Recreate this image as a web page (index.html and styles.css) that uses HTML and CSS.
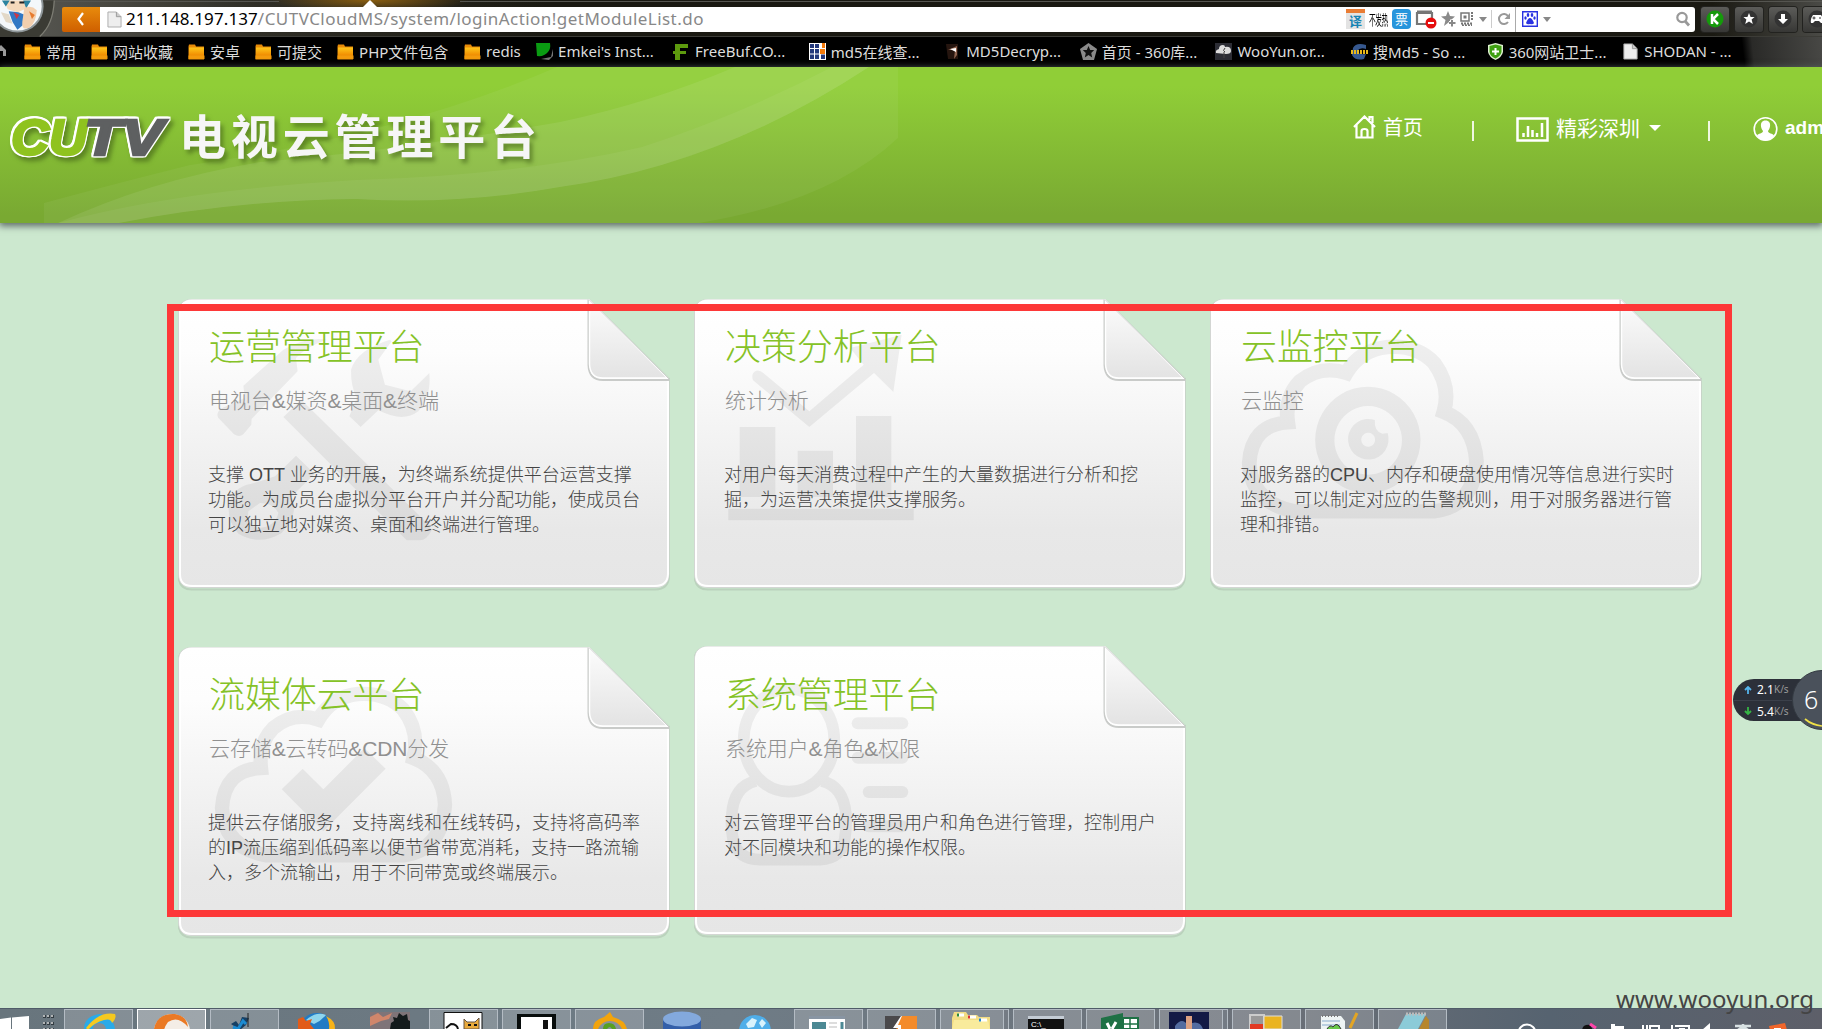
FILE: index.html
```html
<!DOCTYPE html>
<html lang="zh-CN">
<head>
<meta charset="utf-8">
<title>CUTV电视云管理平台</title>
<link rel="stylesheet" href="styles.css">
</head>
<body>
<svg class="defs" width="0" height="0">
  <defs>
    <linearGradient id="paper" x1="0" y1="0" x2="0" y2="1"><stop offset="0" stop-color="#fff"/><stop offset=".18" stop-color="#fdfdfd"/><stop offset=".8" stop-color="#e8e8e8"/><stop offset="1" stop-color="#e6e6e6"/></linearGradient>
    <linearGradient id="flap" x1="0" y1="0" x2="0" y2="1"><stop offset="0" stop-color="#fcfcfc"/><stop offset="1" stop-color="#e3e3e3"/></linearGradient>
    <linearGradient id="fold" x1="0" y1="0" x2="0" y2="1"><stop offset="0" stop-color="#ffc61b"/><stop offset="1" stop-color="#f08a00"/></linearGradient>
    <symbol id="sheet" viewBox="0 0 495 294">
      <path d="M14 1.500H412L491 80V276Q491 290.500 477 290.500H14Q.5 290.500 .5 276V15Q.5 1.500 14 1.500Z" fill="none" stroke="#9aa89c" stroke-opacity=".35" stroke-width="2"/>
      <path d="M14 .5H411.500L491 80V275Q491 288.500 477 288.500H14Q.5 288.500 .5 275V14Q.5 .5 14 .5Z" fill="url(#paper)" stroke="#d3d6d3"/>
      <path d="M14 1.500H411L490 80V275Q489.500 287 477 287H14Q2 287 2 275V14Q2 2 14 1.500Z" fill="none" stroke="#fff" stroke-width="2"/>
      <path d="M410.500 .5V66Q411 81 425 81H491" fill="none" stroke="#c9cbc9" stroke-width="2"/>
      <path d="M411.500 1V65Q412 79 425 79H489.500Z" fill="url(#flap)" stroke="#fff" stroke-width="1.500"/>
      <path d="M411 .5L491 80" stroke="#cdcfcd" fill="none"/>
    </symbol>
    <symbol id="folder" viewBox="0 0 17 16"><path d="M1 1h6l1 2h8v13H.500V3z" fill="#e98b08"/><path d="M1 4h15v8H1z" fill="url(#fold)"/><path d="M.500 12h16v3.500H.500z" fill="#f39a0c"/></symbol>
    <symbol id="page" viewBox="0 0 16 18"><path d="M1 1h9l5 5v11H1z" fill="#eee" stroke="#aaa"/><path d="M10 1v5h5" fill="#ccc" stroke="#999"/></symbol>
  </defs>
</svg>

<div class="browser">
  <div class="toolbar">
    <svg class="avatar" viewBox="0 0 64 37" width="64" height="37">
      <path d="M0 0H56Q54 26 41 37H0Z" fill="#3b3b34"/><path d="M56 0Q55 25 41 37" fill="none" stroke="#7d7d74" stroke-width="1.300"/>
      <circle cx="18" cy="6" r="27" fill="#8e9699"/><circle cx="18" cy="6" r="25" fill="#f4f8fb"/>
      <path d="M4 0h26l-2 8-10 4-10-3z" fill="#f5d9bb"/><path d="M2 0l4 6 4-6zM24 0l3 8 5-8z" fill="#2b83a0"/>
      <path d="M11 2h4M20 2h5" stroke="#222" stroke-width="2"/><path d="M9 11l10 1 7 3-2 10-6 5-5-8z" fill="#3178c4"/><path d="M14 12l6 3-3 4z" fill="#cc3745"/>
      <path d="M25 8q7-4 13 2-1 14-8 18-8 3-7-6z" fill="#f3cfae"/><path d="M30 11l6 4-3 4z" fill="#e77b2e"/><path d="M1 12l8 2 4 10-7-2z" fill="#e3d9c8"/>
    </svg>
    <div class="back"><svg viewBox="0 0 38 24" width="38" height="24"><path d="M21 6l-4.500 6 4.500 6" stroke="#fff" stroke-width="2.200" fill="none"/></svg></div>
    <div class="address">
      <svg width="15" height="17"><use href="#page"/></svg>
      <div class="url"><b>211.148.197.137</b>/CUTVCloudMS/system/loginAction!getModuleList.do</div>
      <div class="tools">
        <span class="yi">译</span><span class="hot">不发热</span><span class="piao">票</span>
        <svg viewBox="0 0 22 20" width="22" height="20"><path d="M2 4h15v11H2z" fill="none" stroke="#777" stroke-width="2.200"/><path d="M2 3h15" stroke="#777" stroke-width="3"/><circle cx="16" cy="14" r="5.500" fill="#e60d0d"/><path d="M13 14h6" stroke="#fff" stroke-width="2"/></svg>
        <svg viewBox="0 0 15 16" width="15" height="16"><path d="M7 0l2 5 5 .5-4 3.500-2 2-5 4 1.500-6L0 5.500 5 5z" fill="#8a8a8a"/><path d="M11 8.500v7M8 12h7" stroke="#fff" stroke-width="4"/><path d="M11 9v6.500M8 12h6.500" stroke="#888" stroke-width="2"/></svg>
        <svg viewBox="0 0 14 14" width="14" height="14"><path d="M1 1h8v8H1z" fill="none" stroke="#777" stroke-width="1.500"/><path d="M3.500 3.500h3v3h-3z" fill="#777"/><path d="M12 0v9M1 11.500h12M2 13.500h10" stroke="#777" stroke-width="2" stroke-dasharray="2 1"/></svg>
        <i class="tri"></i><i class="bar"></i>
        <svg viewBox="0 0 14 14" width="14" height="14"><path d="M11 4A5 5 0 1 0 11 10" fill="none" stroke="#999" stroke-width="2"/><path d="M13 1v6H7.500z" fill="#999"/></svg>
        <i class="bar tall"></i>
        <svg viewBox="0 0 16 16" width="16" height="16"><path d="M.7.700h14.600v14.600H.700z" fill="#fff" stroke="#2932e1" stroke-width="1.400"/><g fill="#2932e1"><ellipse cx="6" cy="4" rx="1.300" ry="2"/><ellipse cx="10" cy="4" rx="1.300" ry="2"/><ellipse cx="3.500" cy="7" rx="1.200" ry="1.700"/><ellipse cx="12.500" cy="7" rx="1.200" ry="1.700"/><path d="M8 7q2 0 4 5-1 2-4 1-3 1-4-1 2-5 4-5"/></g></svg>
        <i class="tri"></i>
      </div>
      <svg class="lens" viewBox="0 0 16 16" width="16" height="16"><circle cx="7" cy="6.500" r="4.700" fill="none" stroke="#999" stroke-width="2.200"/><path d="M10 10l4 4.500" stroke="#999" stroke-width="2.800"/></svg>
    </div>
    <div class="ext"><svg viewBox="0 0 28 24"><circle cx="14" cy="12" r="8.500" fill="#159a0b"/><path d="M11 7v10M17 7l-5 5 5 5" stroke="#fff" stroke-width="2.500" fill="none"/></svg></div>
    <div class="ext"><svg viewBox="0 0 28 24"><circle cx="14" cy="12" r="8.500" fill="#333"/><path d="M14 6l1.600 4h4l-3 2.600 1.200 4.400-3.800-2.500-3.800 2.500 1.200-4.400-3-2.600h4z" fill="#fff"/></svg></div>
    <div class="ext"><svg viewBox="0 0 28 24"><circle cx="14" cy="12" r="8.500" fill="#333"/><path d="M12 7h4v5h3l-5 5-5-5h3z" fill="#fff"/></svg></div>
    <div class="ext"><svg viewBox="0 0 28 24"><circle cx="14" cy="12" r="8.500" fill="#333"/><path d="M10 8h8q3 4 2 8h-2l-2-2h-4l-2 2H8q-1-4 2-8" fill="#fff"/><path d="M9.500 11h3M11 9.500v3M16 11h2" stroke="#333"/></svg></div>
    <svg class="marker" viewBox="0 0 16 8" width="16" height="8"><path d="M8 0l8 8H0z" fill="#fff"/></svg>
  </div>
  <div class="bookmarks">
    <svg class="home" viewBox="0 0 16 18" width="16" height="18"><path d="M-4 8L1 3l5 5v6H3V9H-2" fill="#999"/></svg>
    <div class="bm"><svg><use href="#folder"/></svg>常用</div>
    <div class="bm"><svg><use href="#folder"/></svg>网站收藏</div>
    <div class="bm"><svg><use href="#folder"/></svg>安卓</div>
    <div class="bm"><svg><use href="#folder"/></svg>可提交</div>
    <div class="bm php"><svg><use href="#folder"/></svg>PHP文件包含</div>
    <div class="bm redis"><svg><use href="#folder"/></svg>redis</div>
    <div class="bm site first"><svg viewBox="0 0 17 17"><path d="M5 16l10-2 2-8v7l-4 4z" fill="#777"/><path d="M0 0h14q1 6-2 9-4 5-11 4z" fill="#0a9b12"/></svg>Emkei's Inst...</div>
    <div class="bm site"><svg viewBox="0 0 17 17"><path d="M2 1h13v4H7v3h6v3H7v6H2v-6H0V8h2z" fill="#5d9a0e"/></svg>FreeBuf.CO...</div>
    <div class="bm site"><svg viewBox="0 0 17 17"><path d="M0 0h17v17H0z" fill="#fff"/><path d="M3 1v15M8 1v15M14 9v7" stroke="#24397c" stroke-width="4"/><path d="M0 5.500h17M0 11h17" stroke="#fff"/><path d="M11 6h5v5h-5zM13 0h3v5h-3z" fill="#f47a0a"/></svg>md5在线查...</div>
    <div class="bm site"><svg viewBox="0 0 17 17"><path d="M2 1h12v15H4z" fill="#25150f"/><path d="M4 7l9-4v9l-3 4 1-9z" fill="#8f6450"/><path d="M6 6l6-1v4z" fill="#fff"/></svg>MD5Decryp...</div>
    <div class="bm site"><svg viewBox="0 0 17 17"><path d="M8.500 0L17 6l-3 11H3L0 6z" fill="#8a8a8a"/><path d="M8.500 3l1.700 4h4l-3 3 1 4.500-3.700-2.500-3.700 2.500 1-4.500-3-3h4z" fill="#111"/></svg>首页 - 360库...</div>
    <div class="bm site"><svg viewBox="0 0 17 17"><path d="M0 0h17v17H0z" fill="#2c2d35"/><path d="M1 10q-1-3 3-4 0-4 4-4 2 0 2 2 6-1 6 4 0 3-5 3z" fill="#ddd"/><path d="M10 5q-3 3 0 4M9 9v6" stroke="#444" fill="none"/></svg>WooYun.or...</div>
    <div class="bm site"><svg viewBox="0 0 17 17"><path d="M2 5Q5-1 15 2v4q-6-2-9 2 2 4 9 3l-2 5Q4 18 1 12z" fill="#36588f"/><path d="M0 9h17" stroke="#e9b91a" stroke-width="4" stroke-dasharray="2 1"/></svg>搜Md5 - So ...</div>
    <div class="bm site"><svg viewBox="0 0 17 17"><path d="M8.500 0L16 2v7q-1 5-7.500 8Q2 14 1 9V2z" fill="#def0cf"/><path d="M8.500 1.500L14.500 3v6q-1 4-6 6.500Q3 13 2.500 9V3z" fill="#3fa012"/><path d="M8.500 5v7M5 8.500h7" stroke="#fff" stroke-width="2"/></svg>360网站卫士...</div>
    <div class="bm site"><svg><use href="#page"/></svg>SHODAN - ...</div>
  </div>
</div>

<header class="banner">
  <svg class="waves" viewBox="44 67 854 156" width="854" height="156">
    <path d="M44 203Q110 185 190 165Q400 135 557 67H898V138Q830 202 699 223H44Z" fill="#fff" opacity=".05"/>
    <path d="M58 223Q150 180 260 162Q400 150 560 122Q650 103 735 67H869Q720 165 560 187Q460 205 356 199Q240 200 119 223Z" fill="#fff" opacity=".08"/>
    <path d="M58 223Q180 190 356 180Q520 175 642 147Q740 115 832 67H869Q720 165 560 187Q460 205 356 199Q240 200 119 223Z" fill="#fff" opacity=".05"/>
  </svg>
  <svg class="logo" width="560" height="70" viewBox="0 100 560 70">
    <g class="cutv">
      <text x="11" y="155" textLength="76" lengthAdjust="spacingAndGlyphs" fill="#8fc31f" stroke="#8fc31f">CU</text>
      <text x="84" y="155" textLength="79" lengthAdjust="spacingAndGlyphs" fill="#5e6061" stroke="#5e6061">TV</text>
    </g>
    <text class="brand" x="179" y="153.500" textLength="358">电视云管理平台</text>
  </svg>
  <nav class="nav">
    <a class="n-home"><svg viewBox="0 0 23 24" width="23" height="24"><path d="M1 12L11.500 1.500 22 12M3.500 10v12.500h16V10M16.500 5V2h3v6M8.500 22v-6q0-2 3-2t3 2v6" fill="none" stroke="#fff" stroke-width="2.200"/></svg><span>首页</span></a>
    <i></i>
    <a class="n-site"><svg viewBox="0 0 33 25" width="33" height="25"><path d="M1.500 1.500h30v22h-30z" fill="none" stroke="#fff" stroke-width="2.500"/><path d="M7.500 20v-4M12 20V9M16.500 20v-7M26 20V6" stroke="#fff" stroke-width="2.500"/><path d="M21 20v-4" stroke="#fff" stroke-width="2.500"/></svg><span>精彩深圳</span><b></b></a>
    <i></i>
    <a class="n-user"><svg viewBox="0 0 25 26" width="25" height="26"><circle cx="12.500" cy="13" r="11.300" fill="none" stroke="#fff" stroke-width="1.600"/><path d="M12.500 4.500c3.500 0 5 2.500 4.500 6-.3 2-1 3-2 4.500 0 2.500 5 2.500 6 4.500q-3 5-8.500 5T4 19.500c1-2 6-2 6-4.500-1-1.500-1.700-2.500-2-4.500-.5-3.500 1-6 4.500-6" fill="#fff"/></svg><span>admin</span></a>
  </nav>
</header>

<main class="modules">
  <section class="card">
    <svg class="sheet"><use href="#sheet" width="495" height="294"/></svg>
    <svg class="mark" viewBox="57 28 1473 867" preserveAspectRatio="none">
      <path d="M250 288L370 180Q440 140 500 150Q440 170 408 205L413 245L275 388L274 405L250 434Q238 444 222 434L175 385Q166 370 185 356L254 325Z"/>
      <path d="M370 382L424 330L806 705L815 722Q800 752 780 752L740 752Z"/>
      <path d="M690 150Q590 180 573 240Q572 290 590 325L568 380L602 412L655 362Q730 400 775 365Q815 320 808 250L752 305L675 285L655 210L695 155Z"/>
      <path fill-rule="evenodd" d="M408 498L464 552L395 620Q420 670 365 730Q300 770 235 732Q200 690 207 645Q215 600 260 585Q305 575 345 560ZM300 640L265 665Q260 710 295 715Q345 712 355 670Q340 640 300 640"/>
    </svg>
    <h2>运营管理平台</h2><h3>电视台&amp;媒资&amp;桌面&amp;终端</h3>
    <p>支撑 OTT 业务的开展，为终端系统提供平台运营支撑<br>功能。为成员台虚拟分平台开户并分配功能，使成员台<br>可以独立地对媒资、桌面和终端进行管理。</p>
  </section>
  <section class="card">
    <svg class="sheet"><use href="#sheet" width="495" height="294"/></svg>
    <svg class="mark" viewBox="45 28 1473 867" preserveAspectRatio="none">
      <path d="M179 412H286V622H179ZM353 483H459V622H353ZM528 379H634V622H528ZM145 657H701V692H145Z"/>
      <path d="M219 272Q212 250 228 243Q240 240 250 250L388 365L551 225L510 175L665 135L640 307L582 250L388 412Z"/>
    </svg>
    <h2>决策分析平台</h2><h3>统计分析</h3>
    <p>对用户每天消费过程中产生的大量数据进行分析和挖<br>掘，为运营决策提供支撑服务。</p>
  </section>
  <section class="card">
    <svg class="sheet"><use href="#sheet" width="495" height="294"/></svg>
    <svg class="mark" viewBox="32 28 1426 867" preserveAspectRatio="none">
      <path class="line" d="M255 398Q150 405 143 520Q150 640 275 665H680Q795 650 803 515Q795 400 708 367Q730 290 680 220Q630 165 545 172Q465 180 425 250Q350 225 290 275Q245 325 255 398Z"/>
      <path fill-rule="evenodd" d="M488 291A153 160 0 1 1 487 291ZM488 349A98 103 0 1 0 489 349Z"/>
      <path fill-rule="evenodd" d="M508 391Q505 425 530 432L545 430A59 61 0 1 1 508 391ZM488 429A20 21 0 1 0 489 429Z"/>
    </svg>
    <h2>云监控平台</h2><h3>云监控</h3>
    <p>对服务器的CPU、内存和硬盘使用情况等信息进行实时<br>监控，可以制定对应的告警规则，用于对服务器进行管<br>理和排错。</p>
  </section>
  <section class="card">
    <svg class="sheet"><use href="#sheet" width="495" height="294"/></svg>
    <svg class="mark" viewBox="57 37 1473 867" preserveAspectRatio="none">
      <path class="line" d="M303 400Q193 405 186 520Q193 640 320 662H730Q846 645 855 510Q850 405 760 370Q780 290 730 225Q680 172 595 178Q515 185 475 255Q400 230 340 280Q295 325 303 400Z"/>
      <path d="M365 464L428 402L490 464L613 340L677 402L490 590Z"/>
    </svg>
    <h2>流媒体云平台</h2><h3>云存储&amp;云转码&amp;CDN分发</h3>
    <p>提供云存储服务，支持离线和在线转码，支持将高码率<br>的IP流压缩到低码率以便节省带宽消耗，支持一路流输<br>入，多个流输出，用于不同带宽或终端展示。</p>
  </section>
  <section class="card raised">
    <svg class="sheet"><use href="#sheet" width="495" height="294"/></svg>
    <svg class="mark" viewBox="45 35 1473 867" preserveAspectRatio="none">
      <ellipse class="line thin" cx="327" cy="318" rx="136" ry="154"/>
      <path class="line thin" d="M228 440Q160 455 155 545Q152 580 160 620Q175 675 240 676H420Q485 672 494 615Q500 580 498 540Q490 455 425 440"/>
      <rect x="515" y="249" width="170" height="36" rx="18"/><rect x="515" y="352" width="170" height="36" rx="18"/><rect x="548" y="455" width="137" height="36" rx="18"/><rect x="548" y="558" width="137" height="36" rx="18"/>
    </svg>
    <h2>系统管理平台</h2><h3>系统用户&amp;角色&amp;权限</h3>
    <p>对云管理平台的管理员用户和角色进行管理，控制用户<br>对不同模块和功能的操作权限。</p>
  </section>
</main>

<div class="frame"></div>

<div class="meter">
  <div class="rates">
    <div><svg viewBox="0 0 8 8" width="8" height="8"><path d="M4 8V1M1 4l3-3 3 3" fill="none" stroke="#54b4ec" stroke-width="1.800"/></svg>2.1<small>K/s</small></div>
    <div><svg viewBox="0 0 8 8" width="8" height="8"><path d="M4 0v7M1 4l3 3 3-3" fill="none" stroke="#35b545" stroke-width="1.800"/></svg>5.4<small>K/s</small></div>
  </div>
  <div class="ball">6<svg viewBox="0 0 60 60" width="60" height="60"><path d="M13 49Q20 55 30 56" fill="none" stroke="#efe048" stroke-width="1.700"/></svg></div>
</div>
<div class="watermark">www.wooyun.org</div>

<footer class="taskbar">
  <svg class="start" viewBox="0 0 64 21" width="64" height="21"><path d="M0 10l11-1.500V21H0zM12 8.500L29 7v14H12z" fill="#fff"/><path d="M43 7.500h11M43 14.500h11M43 20.500h11" stroke="#333c42" stroke-width="3" stroke-dasharray="3 1"/><path d="M43 7h11M43 14h11M43 20h11" stroke="#ddd" stroke-width="1.500" stroke-dasharray="2 2"/></svg>
  <div class="task on"><svg viewBox="0 0 69 21"><path d="M20 21q0-13 16-15 13 2 15 15h-9q-1-6-7-6t-6 6z" fill="#2aaae8"/><path d="M22 20Q35 3 51 6q2 4-3 9-1-5-8-3-10 3-16 10z" fill="#f6c91f"/></svg></div>
  <div class="task on active"><svg viewBox="0 0 69 21"><ellipse cx="35" cy="23" rx="18" ry="17" fill="#f4ede6"/><path d="M17 21Q20 5 38 6q12 2 13 13-10-12-20-5-3 4-4 8z" fill="#ea7924"/></svg></div>
  <div class="task on"><svg viewBox="0 0 69 21"><path d="M21 16l5-3 3 4 3-8 7 1-3 7-6 5z" fill="#173f63"/><path d="M23 19l5 2 5-8 3 3" stroke="#1c8bd1" stroke-width="3" fill="none"/><path d="M38 5v14" stroke="#222"/></svg></div>
  <div class="task"><svg viewBox="0 0 69 21"><circle cx="34" cy="23" r="18" fill="#217bc5"/><path d="M23 12q10-9 20-5-5 6-12 9z" fill="#8ed5ed"/><path d="M15 21V11l5-2 3 4 6-2-2 5 4 5z" fill="#e25b18"/><path d="M43 8q10 5 9 13h-6q1-7-3-13" fill="#f7b319"/></svg></div>
  <div class="task"><svg viewBox="0 0 69 21"><path d="M14 4h40v17H14z" fill="#7f7478"/><path d="M14 9l8-4 5 4 9-4-3 6-8 2-11 5z" fill="#d1866b"/><path d="M34 21l1-6 3-2-1-4 4 1 2-5 4 3 4-2 1 6 2 1v8z" fill="#141b1c"/></svg></div>
  <div class="task on"><svg viewBox="0 0 69 21"><path d="M15 4.500h38V22H15z" fill="#fff" stroke="#111"/><path d="M35 21V11l3 3h8l4-4v11z" fill="#e9aa3c" stroke="#654"/><path d="M17 20l5-4q6 0 7 5M39 17h3M45 17h3" stroke="#111" stroke-width="2" fill="none"/></svg></div>
  <div class="task on"><svg viewBox="0 0 69 21"><path d="M15 6h39v15H15z" fill="#080d0c"/><path d="M19 9h31v12H19z" fill="#fff"/><path d="M41 12h5v9h-5z" fill="#111"/></svg></div>
  <div class="task on"><svg viewBox="0 0 69 21"><path d="M18 21q0-9 11-12l6-5 3 5q12 3 14 12h-5q-4-8-12-8t-12 8z" fill="#f2a40c"/><path d="M28 21q0-6 6-6t7 6h-4q-2-4-5 0z" fill="#58a020"/></svg></div>
  <div class="task"><svg viewBox="0 0 69 21"><path d="M15 11v10h38V11z" fill="#335fa9"/><ellipse cx="34" cy="11" rx="19" ry="7.500" fill="#83a9dd"/></svg></div>
  <div class="task"><svg viewBox="0 0 69 21"><circle cx="34" cy="23" r="16" fill="#4faee9"/><path d="M25 16l6-6 5 2-3 7-6 1zM41 11l4 4-4 5-3-5z" fill="#d8f2fc"/></svg></div>
  <div class="task on"><svg viewBox="0 0 69 21"><path d="M15 8h36v13H15z" fill="#fff"/><path d="M15 8h36v3H15z" fill="#8895a3"/><path d="M18 14h14v7H18z" fill="#4c8994"/><path d="M35 15h8M35 19h8" stroke="#bbb"/><path d="M48 14v7" stroke="#4c8994" stroke-width="3"/></svg></div>
  <div class="task on"><svg viewBox="0 0 69 21"><path d="M18 8h32v13H18z" fill="#f48b2a"/><path d="M18 8h17l-8 11h4l-2 2H18z" fill="#4a494b"/><path d="M34 8l-8 12h5v1h3v-4h-3l4-9z" fill="#fff"/></svg></div>
  <div class="task on stack"><svg viewBox="0 0 69 21"><path d="M12 10l2-6h12l2 3h9l2 2h11v12H12z" fill="#f2dc83"/><path d="M14 12h34l2 9H12z" fill="#f9eb9c"/><path d="M17 7h7M28 9h8M39 12h8" stroke="#fff" stroke-width="3"/><path d="M17 7h2" stroke="#2c8a3c" stroke-width="3"/><path d="M28 9h2" stroke="#d33" stroke-width="3"/><path d="M39 12h2" stroke="#28c" stroke-width="3"/></svg></div>
  <div class="task on"><svg viewBox="0 0 69 21"><path d="M15 8h36v13H15z" fill="#111"/><path d="M15 8h36v3H15z" fill="#c4ccd5"/><text x="18" y="19" font-size="8" fill="#fff">C:\_</text></svg></div>
  <div class="task on"><svg viewBox="0 0 69 21"><path d="M15 10l22-5v16H15z" fill="#1e7145"/><path d="M37 10h15v11H37z" fill="#fff" stroke="#1e7145" stroke-width="2"/><path d="M37 16h14M44 10v10" stroke="#1e7145" stroke-width="1.500"/><path d="M21 15l3 6M30 14l-4 7" stroke="#fff" stroke-width="3"/></svg></div>
  <div class="task on stack"><svg viewBox="0 0 69 21"><path d="M10 4h40v17H10z" fill="#131a45"/><path d="M27 8h6v13h-6z" fill="#dca182"/><path d="M16 18q6-8 11-3v6H16zM33 15q8-2 11 6H33z" fill="#536ca0"/></svg></div>
  <div class="task on"><svg viewBox="0 0 69 21"><path d="M18 7h14v14H18z" fill="#999" stroke="#ccc" stroke-width="2"/><path d="M18 16h13v5H18z" fill="#e23a23"/><path d="M32 8h18v13H32z" fill="#eab421" stroke="#ddd"/></svg></div>
  <div class="task on"><svg viewBox="0 0 69 21"><path d="M16 8h20l4 5v8H16z" fill="#eef4f4"/><path d="M17 8h18" stroke="#777" stroke-width="2" stroke-dasharray="1 2"/><path d="M17 13h18M17 17h18" stroke="#8ac"/><path d="M22 21q3-5 6-2 4-6 8 2" fill="#69c94a" stroke="#333"/><path d="M45 20l7-15" stroke="#e3a524" stroke-width="3"/></svg></div>
  <div class="task on"><svg viewBox="0 0 69 21"><path d="M28 6h20l-8 15H20z" fill="#8ccbd8"/><path d="M28 6h20" stroke="#bbb" stroke-width="3" stroke-dasharray="2 1"/><path d="M48 8l3 4v9H41z" fill="#b6862c"/></svg></div>
  <svg class="tray" viewBox="1510 0 312 21" width="312" height="21">
    <circle cx="1527" cy="24" r="8.500" fill="none" stroke="#fff" stroke-width="2"/><path d="M1582 21q1-6 8-5l3 5z" fill="#111"/><path d="M1590 15l6 4" stroke="#f4a" stroke-width="3"/><path d="M1611 15h4v2h9v4h-13z" fill="#fff"/><path d="M1643 16v5M1647 16v5M1650 21v-4h9v4" stroke="#fff" stroke-width="2" fill="none"/><path d="M1672 16v5M1675 17h14v4M1679 20h6" stroke="#fff" stroke-width="2" fill="none"/><path d="M1702 21l8-7v7z" fill="#fff"/><path d="M1735 17h16M1743 15v6M1738 21q5-5 10 0" stroke="#d7e0e2" stroke-width="2.500" fill="none"/><path d="M1769 17l16-3 2 7h-17z" fill="#f1662b"/><path d="M1774 20h7" stroke="#fff" stroke-width="2"/>
  </svg>
</footer>
</body>
</html>
```
FILE: styles.css
```css
* { box-sizing: border-box; }
html, body { margin: 0; height: 100%; overflow: hidden; }
body {
  position: relative;
  display: flex;
  flex-direction: column;
  width: 1822px;
  height: 1029px;
  background: #cce8cf;
  font-family: "Liberation Sans", "Noto Sans CJK SC", sans-serif;
}
svg { display: block; flex: none; }
h2, h3, p { margin: 0; font-weight: 300; }
.defs { position: absolute; }

/* browser chrome */
.browser { height: 67px; overflow: hidden; background: #000; font-family: "Noto Sans", "Noto Sans CJK SC", sans-serif; }
.toolbar {
  position: relative;
  display: flex;
  align-items: center;
  height: 37px;
  padding-top: 1px;
  border-bottom: 1px solid #3c3c37;
  background:
    linear-gradient(#555550, #555550) 0 1px / 279px 1px no-repeat,
    linear-gradient(#555550, #555550) 460px 1px / 1362px 1px no-repeat,
    radial-gradient(ellipse 100px 12px at 370px 0, #8a5e10, transparent),
    linear-gradient(90deg, #5b5b56, #2f2e26 14%, #1a1912 30%, #1a1912 94%, #4a4a46);
}
.avatar { width: 62px; margin-top: -1px; }
.back { flex: none; width: 38px; height: 25px; margin-top: 1px; border-radius: 2px 0 0 2px; background: linear-gradient(#e88b0c, #cf5f00); }
.address { flex: none; display: flex; align-items: center; width: 1595px; height: 25px; margin: 1px 6px 0 0; padding: 0 4px 0 7px; background: #fff; border-radius: 0 3px 3px 0; }
.url { flex: none; width: 1220px; margin: -2px 0 0 4px; font-size: 17px; letter-spacing: .46px; color: #888; white-space: nowrap; }
.url b { font-weight: 400; color: #000; letter-spacing: .1px; }
.tools { display: flex; align-items: center; gap: 4px; }
.yi, .piao, .hot { flex: none; width: 19px; height: 20px; font-size: 13px; line-height: 20px; text-align: center; font-family: "Noto Sans CJK SC", sans-serif; }
.yi { background: #e3e3e3; color: #1784b4; border-top: 4px solid #e97c33; line-height: 15px; font-weight: 700; }
.hot { font-size: 14px; letter-spacing: -1px; white-space: nowrap; text-align: left; transform: scaleX(.48); transform-origin: 0 50%; color: #000; }
.piao { background: #2795dc; color: #fff; border-radius: 4px; }
.tri { width: 0; margin-left: 1px; border: 4px solid transparent; border-top: 5px solid #888; border-bottom: 0; }
.bar { width: 1px; height: 18px; margin: 0 1px 0 0; background: #ccc; }
.bar.tall { height: 25px; background: #aaa; margin: 0 2px 0 0; }
.lens { margin-left: auto; }
.ext { width: 28px; height: 25px; margin: 1px 6px 0 0; flex: none; border-radius: 3px; background: linear-gradient(#5c5c59, #373735); box-shadow: 0 0 0 1px #22221f; }
.marker { position: absolute; left: 362px; top: 0; }
.bookmarks { display: flex; align-items: center; height: 30px; padding-bottom: 2px; color: #ddd; font-size: 15px; white-space: nowrap; background: linear-gradient(84deg, transparent 1735px, #2a2a28 1745px, #4b4b48 1822px); }
.home { margin-right: 8px; }
.bm { display: flex; align-items: center; flex: none; gap: 5px; margin-right: 15px; }
.bm svg { width: 17px; height: 17px; }
.bm.php { width: 112px; letter-spacing: 0; }
.bm.redis { width: 57px; letter-spacing: 0; }
.bm.site { width: 135.600px; margin-right: 0; letter-spacing: 0; }
.bm.site.first { width: 137px; }

/* green banner */
.banner { position: relative; height: 156px; background: linear-gradient(#90ce37 12%, #79a932 95%); box-shadow: 0 2px 7px 1px #5d6a66; }
.waves { position: absolute; left: 44px; top: 0; }
.logo { position: absolute; left: 0; top: 33px; filter: drop-shadow(3px 4px 2px rgba(60, 90, 20, .55)); }
.cutv { font: italic 700 50px "Liberation Sans", sans-serif; stroke-width: 2.500px; filter: drop-shadow(1.500px 0 #fff) drop-shadow(-1.500px 0 #fff) drop-shadow(0 1.500px #fff) drop-shadow(0 -1.500px #fff); }
.brand { font: 700 47px "Noto Sans CJK SC", sans-serif; fill: #f6f6f6; }
.nav { position: absolute; left: 1353px; top: 43px; display: flex; align-items: center; height: 34px; color: #fff; font-size: 21px; font-weight: 400; white-space: nowrap; }
.nav a { display: flex; align-items: center; gap: 7px; }
.nav span { margin-top: -1px; }
.nav i { width: 2px; height: 20px; background: #f0f7e2; margin-top: 7px; }
.n-home { width: 119px; font-size: 20px; }
.n-site { width: 192px; margin-left: 42px; }
.n-site svg { margin-top: 5px; }
.nav .n-site b { border: 6px solid transparent; border-top-color: #fff; border-bottom: 0; margin: 2px 0 0 2px; }
.n-user { margin-left: 43px; font-weight: 700; font-size: 19px; }
.n-user svg { margin-top: 4px; }
.nav .n-user span { margin-top: 2px; }

/* module cards */
.modules { display: grid; grid-template-columns: repeat(3, 491px); grid-auto-rows: 289px; gap: 59px 25px; padding: 76px 0 0 179px; }
.card { position: relative; padding: 22px 0 0 30px; }
.sheet, .mark { position: absolute; left: 0; top: 0; }
.sheet { left: -1px; width: 495px; height: 293px; }
.mark { width: 491px; height: 289px; fill: #000; opacity: .055; }
.raised .sheet, .raised .mark { top: -1px; }
.mark .line { fill: none; stroke: #000; stroke-width: 43; }
.mark .thin { stroke-width: 35; }
.card h2, .card h3, .card p { position: relative; white-space: nowrap; }
.card h2 { font-size: 36px; line-height: 54px; color: #85c226; letter-spacing: -.1px; }
.card h3 { margin-top: 11px; font-size: 21px; line-height: 30px; color: #909090; letter-spacing: -.1px; }
.card p { margin: 47px 0 0 -1px; font-size: 18px; line-height: 25px; color: #444; }

/* overlays */
.frame { position: absolute; left: 167px; top: 304px; width: 1565px; height: 613px; border: 7px solid #fd3838; }
.meter { position: absolute; left: 1733px; top: 670px; width: 89px; height: 60px; overflow: hidden; display: flex; align-items: center; color: #fff; font-family: "Noto Sans", sans-serif; }
.rates { width: 89px; height: 42px; border-radius: 21px 0 0 21px; background: #2c3039; flex: none; }
.rates div { display: flex; align-items: center; height: 21px; padding-left: 11px; font-size: 12px; line-height: 21px; }
.rates div + div { border-top: 1px solid #3b404a; }
.rates svg { margin-right: 5px; }
.rates small { font-size: 10px; color: #999; }
.ball { position: relative; flex: none; width: 60px; height: 60px; margin-left: -30px; padding-left: 11px; border-radius: 50%; background: #4a515b; border: 1px solid #343a42; font-size: 25px; line-height: 56px; font-weight: 300; }
.ball svg { position: absolute; left: -1px; top: -1px; }
.watermark { position: absolute; left: 1616px; top: 982px; z-index: 2; font: 24px/34px "Noto Sans", sans-serif; letter-spacing: .1px; color: #444; }

/* taskbar */
.taskbar { position: absolute; left: 0; bottom: 0; width: 1822px; height: 21px; display: flex; gap: 4px; overflow: hidden; background: linear-gradient(90deg, #68757d, #6f7c86 40%, #6b7078 70%, #566370 85%, #5d5f69); border-top: 1px solid #4f5c68; }
.start { margin-right: -4px; }
.task { width: 69px; flex: none; }
.task svg { width: 69px; height: 21px; margin-top: -1px; }
.task.on { border: 1px solid #b4bcc4; border-bottom: 0; background: rgba(255, 255, 255, .18); }
.task.on svg { margin: -2px 0 0 -1px; }
.task.active { border-color: #fff; background: rgba(255, 255, 255, .35); }
.task.stack { box-shadow: inset -4px 0 #747b84, inset -5px 0 #b4bcc4; }
.tray { margin-left: auto; }
```
